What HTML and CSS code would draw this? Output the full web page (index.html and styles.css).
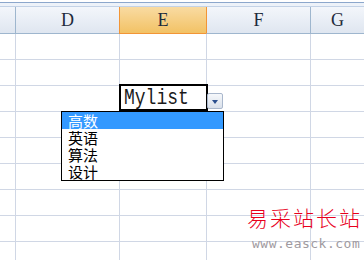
FILE: index.html
```html
<!DOCTYPE html>
<html lang="zh">
<head>
    <meta charset="UTF-8">
    <title>Mylist</title>
    <link rel="stylesheet" href="styles.css">
</head>
<body>
    <div class="sheet">
        <div class="topbar"></div>
        <div class="grid">
            <div class="hd"></div>
            <div class="hd">D</div>
            <div class="hd sel">E</div>
            <div class="hd next">F</div>
            <div class="hd">G</div>
        </div>
        <div class="grid rows" id="rows"></div>

        <div class="editor"><span>Mylist</span></div>
        <div class="drop-btn"><span class="arrow"></span></div>
        <ul class="droplist">
            <li class="active">高数</li>
            <li>英语</li>
            <li>算法</li>
            <li>设计</li>
        </ul>

        <div class="mark">
            <div class="mark-cn">易采站长站</div>
            <div class="mark-url">www.easck.com</div>
        </div>
    </div>

    <script>
        // filas vacias de la hoja
        const rows = document.getElementById('rows');
        for (let i = 0; i < 9; i++) {
            for (let c = 0; c < 5; c++) {
                const cell = document.createElement('div');
                cell.className = 'cell';
                rows.appendChild(cell);
            }
        }
    </script>
</body>
</html>
```

FILE: styles.css
```css
body {
    margin: 0;
    background-color: #fff;
    overflow: hidden;
}
.sheet {
    position: relative;
    width: 364px;
    height: 260px;
    overflow: hidden;
}
.topbar {
    margin-top: 2px;
    height: 3px;
    border-top: 1px solid #8ca7cc;
    border-bottom: 1px solid #c3d2e6;
    background-color: #edf2f9;
}
.grid {
    display: grid;
    grid-template-columns: 15px 104px 87px 104px 1fr;
}
.hd {
    height: 26px;
    border-left: 1px solid #9eb6ce;
    border-bottom: 1px solid #9eb6ce;
    background: linear-gradient(#f3f6fb, #dfe6f0);
    font-family: "Liberation Serif", serif;
    font-size: 18px;
    color: #1e2b3c;
    text-align: center;
    line-height: 27px;
}
.hd:first-child {
    border-left: none;
}
.hd.sel {
    background: linear-gradient(#f9dba2, #f2c265);
    border-left-color: #f29536;
    border-bottom-color: #f29536;
}
.hd.next {
    border-left-color: #f29536;
}
.cell {
    height: 25px;
    border-left: 1px solid #d0d7e5;
    border-bottom: 1px solid #d0d7e5;
}
.cell:nth-child(5n+1) {
    border-left: none;
}
.editor {
    position: absolute;
    left: 119px;
    top: 84px;
    width: 82px;
    height: 23px;
    border: 2px solid #000;
    background-color: #fff;
    font-family: "Liberation Mono", monospace;
    font-size: 18px;
    line-height: 25px;
    padding-left: 3px;
    color: #1a1a1a;
    white-space: nowrap;
}
.editor span {
    display: inline-block;
    transform: scaleY(1.25);
}
.drop-btn {
    position: absolute;
    left: 207px;
    top: 93px;
    width: 14px;
    height: 14px;
    border: 1px solid #a9b7cc;
    border-radius: 2px;
    background: linear-gradient(#f6f8fb, #d9e0ea);
}
.arrow {
    position: absolute;
    left: 4px;
    top: 6px;
    width: 0;
    height: 0;
    border-left: 3px solid transparent;
    border-right: 3px solid transparent;
    border-top: 4px solid #2b4f8e;
}
.droplist {
    position: absolute;
    left: 61px;
    top: 111px;
    width: 161px;
    margin: 0;
    padding: 0;
    list-style: none;
    border: 1px solid #000;
    background-color: #fff;
    font-family: "Noto Sans CJK SC", sans-serif;
    font-size: 15px;
}
.droplist li {
    height: 17px;
    line-height: 17px;
    padding-left: 6px;
    color: #000;
}
.droplist li.active {
    background-color: #3399ff;
    color: #fff;
}
.mark {
    position: absolute;
    left: 247px;
    top: 204px;
    white-space: nowrap;
}
.mark-cn {
    font-family: "Noto Sans CJK SC", sans-serif;
    font-weight: 300;
    font-size: 21px;
    letter-spacing: 2px;
    color: #e8001c;
    line-height: 26px;
}
.mark-url {
    margin-top: 6px;
    margin-left: 5px;
    font-family: "DejaVu Sans Mono", monospace;
    font-size: 13px;
    line-height: 16px;
    letter-spacing: 0.5px;
    color: #a09aa0;
}
```
